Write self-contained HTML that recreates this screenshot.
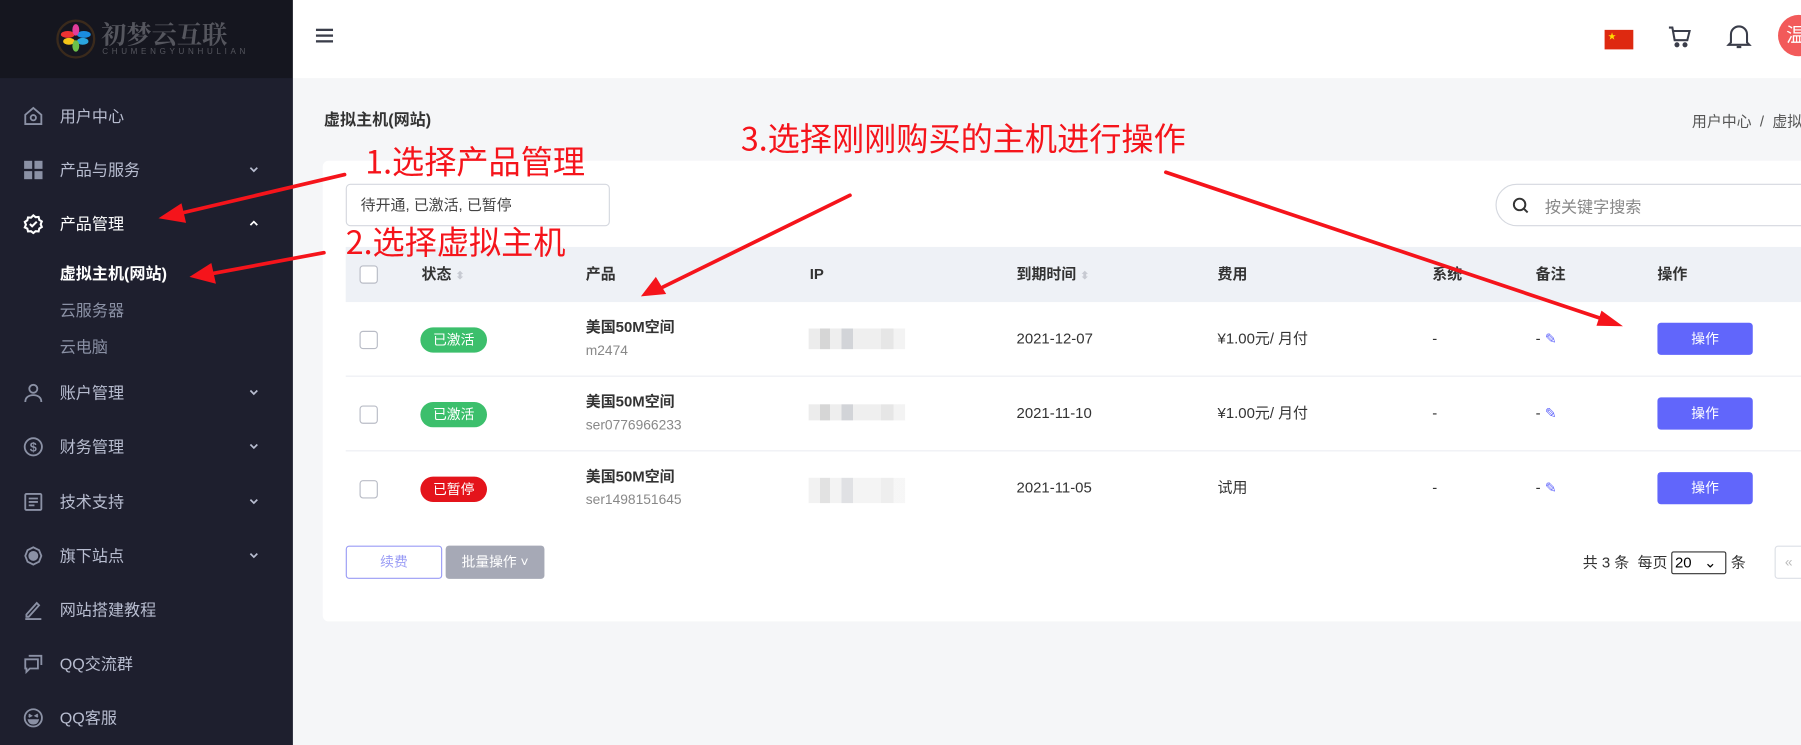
<!DOCTYPE html>
<html><head><meta charset="utf-8"><style>
*{margin:0;padding:0;box-sizing:border-box}
html,body{width:1801px;height:745px;overflow:hidden;background:#f5f6f8;font-family:"Liberation Sans","Noto Sans CJK SC",sans-serif}
#w{position:absolute;left:0;top:0;width:1568px;height:649px;transform:scale(1.14860);transform-origin:0 0;background:#f5f6f8}
.a{position:absolute;white-space:nowrap}
.sb{position:absolute;left:0;top:0;width:255px;height:649px;background:#1e1f2e}
.logo{position:absolute;left:0;top:0;width:255px;height:68px;background:#15161f}
.mi{position:absolute;left:52px;font-size:14px;color:#b8bdd0;line-height:20px}
.ic{position:absolute;left:20px;width:18px;height:18px}
.chev{position:absolute;left:216px;width:10px;height:10px}
.hd{position:absolute;left:255px;top:0;width:1313px;height:68px;background:#fff}
.card{position:absolute;left:281px;top:140px;width:1300px;height:401px;background:#fff;border-radius:5px}
.th{font-size:13px;color:#333;font-weight:bold;line-height:20px}
.td{font-size:13px;color:#333;line-height:18px}
.cb{position:absolute;left:313px;width:16px;height:16px;border:1px solid #b9bcc6;border-radius:3px;background:#fff}
.bd{position:absolute;left:366px;width:58px;height:22px;border-radius:11px;color:#fff;font-size:12px;text-align:center;line-height:22px}
.op{position:absolute;left:1443px;width:83px;height:28px;background:#6166fb;border-radius:3px;color:#fff;font-size:12px;text-align:center;line-height:28px}
.blur{position:absolute;left:704px;width:84px;height:18px;background:linear-gradient(90deg,#ececec 0 12%,#d6d6d6 12% 22%,#eeeeee 22% 34%,#d2d4d8 34% 46%,#efefef 46% 75%,#e6e6e6 75% 88%,#f3f3f3 88%)}
.red{color:#f5141b;font-size:28px;position:absolute;white-space:nowrap;font-family:"Noto Sans CJK SC","Liberation Sans",sans-serif;line-height:32px}
.ed{color:#6166fb;font-size:12px}
</style></head><body><div id="w">
<div class="sb">
<div class="logo">
<svg class="a" style="left:48px;top:16px" width="36" height="36" viewBox="0 0 36 36"><circle cx="18" cy="18" r="16" fill="none" stroke="#3a2a1c" stroke-width="2"/><ellipse cx="11" cy="14" rx="6" ry="3" fill="#e33"/><ellipse cx="25" cy="14" rx="6" ry="3" fill="#1a8de0"/><ellipse cx="18" cy="10" rx="3" ry="5" fill="#e23c9a"/><ellipse cx="12" cy="20" rx="5" ry="3" fill="#f5c518"/><ellipse cx="24" cy="20" rx="5" ry="3" fill="#2aa6e0"/><ellipse cx="18" cy="24" rx="3" ry="5" fill="#6cc04a"/></svg>
<div class="a" style="left:88px;top:14px;font-size:22px;color:#55565e;font-family:'Noto Serif CJK SC',serif;font-weight:bold;letter-spacing:0px">初梦云互联</div>
<div class="a" style="left:89px;top:42px;font-size:7px;color:#55565e;letter-spacing:3.2px">CHUMENGYUNHULIAN</div>
</div>
<svg class="ic" style="top:92px" viewBox="0 0 18 18" fill="none" stroke="#8b91a5" stroke-width="1.6"><path d="M2 8L9 2l7 6v8H2z"/><circle cx="9" cy="10.5" r="2.3"/></svg>
<div class="mi" style="top:91px">用户中心</div>
<svg class="ic" style="top:139px" viewBox="0 0 18 18" fill="#8b91a5"><rect x="1" y="1" width="7" height="7"/><rect x="10" y="1" width="7" height="7"/><rect x="1" y="10" width="7" height="7"/><rect x="10" y="10" width="7" height="7"/></svg>
<div class="mi" style="top:138px">产品与服务</div>
<svg class="chev" style="top:143px" viewBox="0 0 10 10" fill="none" stroke="#b8bdd0" stroke-width="1.5"><path d="M2 3l3 3 3-3"/></svg>
<svg class="ic" style="top:186px" viewBox="0 0 18 18" fill="none" stroke="#fff" stroke-width="1.8"><path d="M9 1.5l2 1.6 2.6-.2.6 2.5 2.2 1.4-1 2.4 1 2.4-2.2 1.4-.6 2.5-2.6-.2-2 1.6-2-1.6-2.6.2-.6-2.5L1.6 12l1-2.4-1-2.4 2.2-1.4.6-2.5 2.6.2z"/><path d="M6 9l2 2 4-4"/></svg>
<div class="mi" style="top:185px;color:#fff">产品管理</div>
<svg class="chev" style="top:190px" viewBox="0 0 10 10" fill="none" stroke="#fff" stroke-width="1.5"><path d="M2 6l3-3 3 3"/></svg>
<div class="mi" style="top:228px;color:#fff;font-weight:bold">虚拟主机(网站)</div>
<div class="mi" style="top:260px;color:#8b91a5">云服务器</div>
<div class="mi" style="top:292px;color:#8b91a5">云电脑</div>
<svg class="ic" style="top:333px" viewBox="0 0 18 18" fill="none" stroke="#8b91a5" stroke-width="1.6"><circle cx="9" cy="5.5" r="3.5"/><path d="M2 17c0-4 3-6 7-6s7 2 7 6"/></svg>
<div class="mi" style="top:332px">账户管理</div>
<svg class="chev" style="top:337px" viewBox="0 0 10 10" fill="none" stroke="#b8bdd0" stroke-width="1.5"><path d="M2 3l3 3 3-3"/></svg>
<svg class="ic" style="top:380px" viewBox="0 0 18 18" fill="none" stroke="#8b91a5" stroke-width="1.6"><circle cx="9" cy="9" r="7.5"/><text x="9" y="13" font-size="11" text-anchor="middle" fill="#8b91a5" stroke="none" font-weight="bold">$</text></svg>
<div class="mi" style="top:379px">财务管理</div>
<svg class="chev" style="top:384px" viewBox="0 0 10 10" fill="none" stroke="#b8bdd0" stroke-width="1.5"><path d="M2 3l3 3 3-3"/></svg>
<svg class="ic" style="top:428px" viewBox="0 0 18 18" fill="none" stroke="#8b91a5" stroke-width="1.6"><rect x="2" y="2" width="14" height="14" rx="1"/><path d="M5 6h8M5 9h8M5 12h5"/></svg>
<div class="mi" style="top:427px">技术支持</div>
<svg class="chev" style="top:432px" viewBox="0 0 10 10" fill="none" stroke="#b8bdd0" stroke-width="1.5"><path d="M2 3l3 3 3-3"/></svg>
<svg class="ic" style="top:475px" viewBox="0 0 18 18" fill="none" stroke="#8b91a5" stroke-width="1.6"><path d="M9 1.5l5 2.5 2 5-2 5-5 2.5-5-2.5-2-5 2-5z"/><circle cx="9" cy="9" r="3.5" fill="#8b91a5"/></svg>
<div class="mi" style="top:474px">旗下站点</div>
<svg class="chev" style="top:479px" viewBox="0 0 10 10" fill="none" stroke="#b8bdd0" stroke-width="1.5"><path d="M2 3l3 3 3-3"/></svg>
<svg class="ic" style="top:522px" viewBox="0 0 18 18" fill="none" stroke="#8b91a5" stroke-width="1.6"><path d="M3 13L12 3l2 2-9 10H3z"/><path d="M2 17h14"/></svg>
<div class="mi" style="top:521px">网站搭建教程</div>
<svg class="ic" style="top:569px" viewBox="0 0 18 18" fill="none" stroke="#8b91a5" stroke-width="1.6"><path d="M2 5h11v8H6l-3 3v-3H2z"/><path d="M5 2h11v8"/></svg>
<div class="mi" style="top:568px">QQ交流群</div>
<svg class="ic" style="top:616px" viewBox="0 0 18 18" fill="none" stroke="#8b91a5" stroke-width="1.6"><circle cx="9" cy="9" r="7.5"/><path d="M5 11h8c-.5 2-2 3-4 3s-3.5-1-4-3z" fill="#8b91a5"/><path d="M5 6l2 1.2-2 1M13 6l-2 1.2 2 1"/></svg>
<div class="mi" style="top:615px">QQ客服</div>
</div>
<div class="hd">
<svg class="a" style="left:20px;top:24px" width="15" height="14" viewBox="0 0 15 14" fill="#3a3d4a"><rect y="1" width="15" height="2"/><rect y="6" width="15" height="2"/><rect y="11" width="15" height="2"/></svg>
<div class="a" style="left:1142px;top:26px;width:25px;height:17px;background:#de2910"><span style="position:absolute;left:3px;top:1px;color:#ffde00;font-size:7px">★</span></div>
<svg class="a" style="left:1196px;top:21px" width="22" height="22" viewBox="0 0 22 22" fill="none" stroke="#3a3d4a" stroke-width="1.8"><path d="M2 3h3l2 11h11l2-8H6"/><circle cx="9" cy="18" r="1.3" fill="#3a3d4a"/><circle cx="16" cy="18" r="1.3" fill="#3a3d4a"/></svg>
<svg class="a" style="left:1248px;top:20px" width="22" height="24" viewBox="0 0 22 24" fill="none" stroke="#3a3d4a" stroke-width="1.8"><path d="M4 17V10a7 7 0 0114 0v7l2 2H2z"/><path d="M9 21h4"/></svg>
<div class="a" style="left:1293px;top:13px;width:36px;height:36px;border-radius:50%;background:#f25a5a;color:#fff;font-size:17px;line-height:36px;padding-left:7px">温</div>
</div>
<div class="a" style="left:282px;top:94px;font-size:14px;font-weight:bold;color:#333">虚拟主机(网站)</div>
<div class="a" style="left:1473px;top:95px;font-size:13px;color:#555">用户中心 &nbsp;/ &nbsp;虚拟主机</div>
<div class="card"></div>
<div class="a" style="left:301px;top:160px;width:230px;height:37px;border:1px solid #d5d8df;border-radius:4px;font-size:13px;color:#444;line-height:35px;padding-left:12px;background:#fff">待开通, 已激活, 已暂停</div>
<div class="a" style="left:1302px;top:160px;width:300px;height:37px;border:1px solid #d5d8df;border-radius:19px;background:#fff"></div>
<svg class="a" style="left:1316px;top:171px" width="16" height="16" viewBox="0 0 16 16" fill="none" stroke="#333" stroke-width="1.7"><circle cx="7" cy="7" r="5"/><path d="M11 11l3 3"/></svg>
<div class="a" style="left:1345px;top:170px;font-size:14px;color:#888">按关键字搜索</div>
<div class="a" style="left:301px;top:215px;width:1300px;height:48px;background:#eef1f6"></div>
<div class="cb" style="top:231px"></div>
<div class="a th" style="left:367px;top:229px">状态 <span style="color:#c7cad2;font-size:9px">⬍</span></div>
<div class="a th" style="left:510px;top:229px">产品</div>
<div class="a th" style="left:705px;top:229px">IP</div>
<div class="a th" style="left:885px;top:229px">到期时间 <span style="color:#c7cad2;font-size:9px">⬍</span></div>
<div class="a th" style="left:1060px;top:229px">费用</div>
<div class="a th" style="left:1247px;top:229px">系统</div>
<div class="a th" style="left:1337px;top:229px">备注</div>
<div class="a th" style="left:1443px;top:229px">操作</div>
<div class="a" style="left:301px;top:327px;width:1300px;height:1px;background:#eceef2"></div>
<div class="a" style="left:301px;top:392px;width:1300px;height:1px;background:#eceef2"></div>

<div class="cb" style="top:288px"></div><div class="bd" style="top:285px;background:#3cbf6c">已激活</div>
<div class="a td" style="left:510px;top:276px;font-weight:bold">美国50M空间</div><div class="a" style="left:510px;top:298px;font-size:12px;color:#888">m2474</div>
<div class="blur" style="top:286px"></div>
<div class="a td" style="left:885px;top:286px">2021-12-07</div><div class="a td" style="left:1060px;top:286px">¥1.00元/ 月付</div>
<div class="a td" style="left:1247px;top:286px">-</div><div class="a td" style="left:1337px;top:286px">- <span class="ed">✎</span></div>
<div class="op" style="top:281px">操作</div>

<div class="cb" style="top:353px"></div><div class="bd" style="top:350px;background:#3cbf6c">已激活</div>
<div class="a td" style="left:510px;top:341px;font-weight:bold">美国50M空间</div><div class="a" style="left:510px;top:363px;font-size:12px;color:#888">ser0776966233</div>
<div class="blur" style="top:352px;height:14px"></div>
<div class="a td" style="left:885px;top:351px">2021-11-10</div><div class="a td" style="left:1060px;top:351px">¥1.00元/ 月付</div>
<div class="a td" style="left:1247px;top:351px">-</div><div class="a td" style="left:1337px;top:351px">- <span class="ed">✎</span></div>
<div class="op" style="top:346px">操作</div>

<div class="cb" style="top:418px"></div><div class="bd" style="top:415px;background:#e4141b">已暂停</div>
<div class="a td" style="left:510px;top:406px;font-weight:bold">美国50M空间</div><div class="a" style="left:510px;top:428px;font-size:12px;color:#888">ser1498151645</div>
<div class="blur" style="top:416px;height:22px;opacity:.7"></div>
<div class="a td" style="left:885px;top:416px">2021-11-05</div><div class="a td" style="left:1060px;top:416px">试用</div>
<div class="a td" style="left:1247px;top:416px">-</div><div class="a td" style="left:1337px;top:416px">- <span class="ed">✎</span></div>
<div class="op" style="top:411px">操作</div>

<div class="a" style="left:301px;top:475px;width:84px;height:29px;border:1px solid #9a9cf5;border-radius:3px;color:#9a9cf5;font-size:12px;text-align:center;line-height:27px">续费</div>
<div class="a" style="left:388px;top:475px;width:86px;height:29px;background:#a6a9b6;border-radius:3px;color:#fff;font-size:12px;text-align:center;line-height:29px">批量操作 ˅</div>
<div class="a" style="left:1378px;top:480px;font-size:13px;color:#333;line-height:20px">共 3 条 &nbsp;每页 <span style="display:inline-block;width:48px;height:20px;border:1px solid #333;border-radius:2px;font-size:13px;line-height:18px;padding-left:2px;color:#000">20 &nbsp;&nbsp;⌄</span> 条</div>
<div class="a" style="left:1545px;top:475px;width:30px;height:29px;border:1px solid #dcdfe6;border-radius:3px;color:#bbb;font-size:12px;line-height:27px;padding-left:8px">«</div>

<div class="red" style="left:318px;top:124px">1.选择产品管理</div>
<div class="red" style="left:301px;top:194px">2.选择虚拟主机</div>
<div class="red" style="left:645px;top:104px">3.选择刚刚购买的主机进行操作</div>
<svg class="a" style="left:0;top:0" width="1568" height="649">
<g stroke="#f5141b" stroke-width="3.2" fill="none" stroke-linecap="round">
<path d="M300 152L160 185"/><path d="M282 220L186 238"/><path d="M740 170L577 250"/><path d="M1015 150L1393 277"/></g>
<g fill="#f5141b">
<path d="M138 190L158 177 162 194z"/>
<path d="M165 241L184 229 188 247z"/>
<path d="M558 258L571 241 580 256z"/>
<path d="M1413 284L1394.3 270.4 1389.9 283.6z"/>
</g></svg>
</div></body></html>
